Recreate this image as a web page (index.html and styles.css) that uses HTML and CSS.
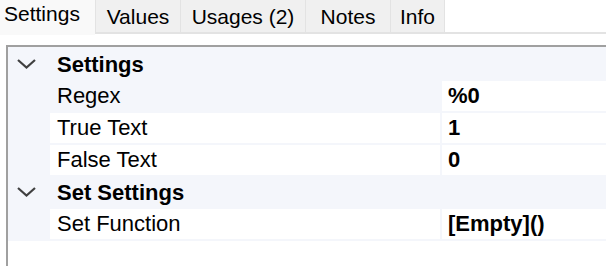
FILE: index.html
```html
<!DOCTYPE html>
<html lang="en">
<head>
    <meta charset="UTF-8">
    <title>Property Settings</title>
    <link rel="stylesheet" href="styles.css">
</head>
<body>
    <div class="tabs">
        <div class="tab active">Settings</div>
        <div class="tab tab-values">Values</div>
        <div class="tab tab-usages">Usages (2)</div>
        <div class="tab tab-notes">Notes</div>
        <div class="tab tab-info">Info</div>
        <div class="tab-fill"></div>
    </div>

    <div class="page">
        <div class="grid">
            <div class="rows">
                <div class="row category">
                    <span class="toggle"><svg width="19" height="10" viewBox="0 0 19 10"><path d="M1 1 L9.5 8.5 L18 1" fill="none" stroke="#404040" stroke-width="2.2"/></svg></span>
                    <span class="cat-name">Settings</span>
                </div>
                <div class="row prop selected">
                    <span class="gutter"></span>
                    <span class="label">Regex</span>
                    <span class="value">%0</span>
                </div>
                <div class="row prop">
                    <span class="gutter"></span>
                    <span class="label">True Text</span>
                    <span class="value">1</span>
                </div>
                <div class="row prop">
                    <span class="gutter"></span>
                    <span class="label">False Text</span>
                    <span class="value">0</span>
                </div>
                <div class="row category">
                    <span class="toggle"><svg width="19" height="10" viewBox="0 0 19 10"><path d="M1 1 L9.5 8.5 L18 1" fill="none" stroke="#404040" stroke-width="2.2"/></svg></span>
                    <span class="cat-name">Set Settings</span>
                </div>
                <div class="row prop">
                    <span class="gutter"></span>
                    <span class="label">Set Function</span>
                    <span class="value">[Empty]()</span>
                </div>
            </div>
        </div>
    </div>
</body>
</html>
```

FILE: styles.css
```css
body, html {
    margin: 0;
    padding: 0;
    background: #fff;
    font-family: "Liberation Sans", Arial, sans-serif;
    color: #000;
    overflow: hidden;
}

.tabs {
    display: flex;
    align-items: flex-start;
    height: 35px;
    font-size: 21px;
}

.tab {
    box-sizing: border-box;
    height: 34px;
    padding-top: 5px;
    text-align: center;
    background: #f0f0f0;
    border-left: 1px solid #e3e3e3;
    border-bottom: 2px solid #e3e3e3;
}

.tab.active {
    width: 95px;
    height: 35px;
    padding-top: 2px;
    padding-left: 4px;
    text-align: left;
    background: #f9f9f9;
    border: none;
}

.tab-values { width: 85px; }
.tab-usages { width: 125px; }
.tab-notes { width: 85px; }
.tab-info { width: 55px; border-right: 1px solid #e3e3e3; }

.tab-fill {
    flex: 1;
    height: 32px;
    border-bottom: 2px solid #e3e3e3;
}

.page {
    padding-top: 10px;
    padding-left: 6px;
}

.grid {
    height: 230px;
    border-top: 2px solid #a0a0a0;
    border-left: 2px solid #a0a0a0;
    background: #fff;
}

.rows {
    display: flex;
    flex-direction: column;
    gap: 2px;
    padding: 2px 0;
    background: #f4f6fb;
    font-size: 22px;
}

.row {
    display: flex;
    align-items: center;
    height: 30px;
}

.category {
    font-weight: bold;
}

.toggle {
    width: 49px;
    padding-left: 9px;
    box-sizing: border-box;
    display: flex;
    align-items: center;
}

.cat-name {
    padding-top: 1px;
}

.gutter {
    width: 42px;
    align-self: stretch;
}

.label {
    box-sizing: border-box;
    width: 390px;
    height: 30px;
    line-height: 30px;
    padding-left: 7px;
    background: #fff;
}

.selected .label {
    background: #f4f6fb;
}

.value {
    flex: 1;
    height: 30px;
    line-height: 30px;
    margin-left: 2px;
    padding-left: 6px;
    background: #fff;
    font-weight: bold;
}
```
